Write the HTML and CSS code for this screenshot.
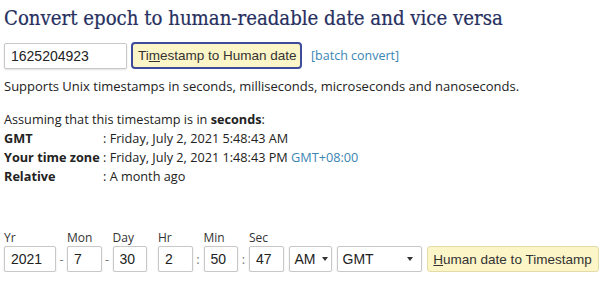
FILE: index.html
```html
<!DOCTYPE html>
<html lang="en">
<head>
  <meta charset="UTF-8">
  <title>Epoch Converter</title>
  <link rel="stylesheet" href="styles.css">
</head>
<body>
  <h1 class="title">Convert epoch to human-readable date and vice versa</h1>

  <div class="row convert-row">
    <input class="text-input ts-input" type="text" value="1625204923">
    <button class="btn btn-focus">Ti<u>m</u>estamp to Human date</button>
    <a class="link" href="#">[batch convert]</a>
  </div>

  <p class="note">Supports Unix timestamps in seconds, milliseconds, microseconds and nanoseconds.</p>

  <div class="result">
    <p class="assume">Assuming that this timestamp is in <b>seconds</b>:</p>
    <div class="res-row"><span class="res-label">GMT</span><span>: Friday, July 2, 2021 5:48:43 AM</span></div>
    <div class="res-row"><span class="res-label">Your time zone</span><span>: Friday, July 2, 2021 1:48:43 PM <a class="link" href="#">GMT+08:00</a></span></div>
    <div class="res-row"><span class="res-label">Relative</span><span>: A month ago</span></div>
  </div>

  <div class="date-form">
    <div class="field">
      <label>Yr</label>
      <input class="text-input w-yr" type="text" value="2021">
    </div>
    <span class="sep">-</span>
    <div class="field">
      <label>Mon</label>
      <input class="text-input w-sm" type="text" value="7">
    </div>
    <span class="sep">-</span>
    <div class="field">
      <label>Day</label>
      <input class="text-input w-sm" type="text" value="30">
    </div>
    <span class="sep"></span>
    <div class="field">
      <label>Hr</label>
      <input class="text-input w-sm" type="text" value="2">
    </div>
    <span class="sep">:</span>
    <div class="field">
      <label>Min</label>
      <input class="text-input w-sm" type="text" value="50">
    </div>
    <span class="sep">:</span>
    <div class="field">
      <label>Sec</label>
      <input class="text-input w-sm" type="text" value="47">
    </div>
    <div class="field gap-l">
      <div class="select w-ampm">AM<span class="caret"></span></div>
    </div>
    <div class="field">
      <div class="select w-tz">GMT<span class="caret"></span></div>
    </div>
    <div class="field">
      <button class="btn"><u>H</u>uman date to Timestamp</button>
    </div>
  </div>
</body>
</html>
```

FILE: styles.css
```css
body {
  margin: 0;
  padding: 0 4px;
  font-family: "Open Sans", sans-serif;
  font-size: 12.7px;
  color: #222;
  background: #fff;
}

.title {
  margin: 0;
  padding-top: 6px;
  font-family: "DejaVu Serif", serif;
  font-stretch: condensed;
  font-weight: normal;
  font-size: 20.2px;
  color: #27305f;
  white-space: nowrap;
  -webkit-text-stroke: 0.2px #27305f;
}

.row {
  display: flex;
  align-items: center;
}

.convert-row {
  margin-top: 12px;
}

.text-input {
  box-sizing: border-box;
  height: 26px;
  border: 1px solid #c8c8c8;
  border-radius: 2px;
  box-shadow: 0 1px 2px rgba(0, 0, 0, 0.12);
  padding: 0 6px;
  font-family: "Liberation Sans", Arial, sans-serif;
  font-size: 14px;
  color: #222;
  flex-shrink: 0;
}

.ts-input {
  width: 123px;
}

.btn {
  box-sizing: border-box;
  height: 26px;
  padding: 0 5px;
  background: #fcf5c7;
  border: 1px solid #e4dca8;
  border-radius: 3px;
  font-family: "Liberation Sans", Arial, sans-serif;
  font-size: 13.5px;
  color: #333;
  white-space: nowrap;
  flex-shrink: 0;
}

.btn-focus {
  margin-left: 4px;
  height: 27px;
  width: 171px;
  border: 2px solid #3d4b9a;
  border-radius: 4px;
}

.link {
  color: #3a86b4;
  text-decoration: none;
}

.convert-row .link {
  margin-left: 9px;
  font-size: 12.5px;
}

.note {
  margin: 8px 0 0;
  font-size: 13px;
}

.result {
  margin-top: 15px;
}

.assume {
  margin: 0 0 1px;
}

.res-row {
  display: flex;
  line-height: 19px;
}

.res-label {
  width: 99px;
  font-weight: bold;
}

.date-form {
  display: flex;
  align-items: flex-end;
  margin-top: 43px;
}

.field {
  display: flex;
  flex-direction: column;
  flex-shrink: 0;
}

.field label {
  font-size: 12px;
  line-height: 17px;
  color: #333;
}

.w-yr {
  width: 52px;
}

.w-sm {
  width: 34.5px;
}

.sep {
  flex-shrink: 0;
  width: 11px;
  height: 26px;
  line-height: 26px;
  text-align: center;
  color: #777;
}

.gap-l {
  margin-left: 5px;
}

.select {
  box-sizing: border-box;
  height: 26px;
  display: flex;
  align-items: center;
  justify-content: space-between;
  padding: 0 4px 0 5px;
  border: 1px solid #c8c8c8;
  border-radius: 2px;
  box-shadow: 0 1px 2px rgba(0, 0, 0, 0.12);
  font-family: "Liberation Sans", Arial, sans-serif;
  font-size: 14px;
  color: #222;
  margin-right: 5px;
}

.w-ampm {
  width: 43px;
  padding-right: 3px;
}

.w-tz {
  width: 85px;
  padding-right: 8px;
}

.caret {
  width: 0;
  height: 0;
  border-left: 3.5px solid transparent;
  border-right: 3.5px solid transparent;
  border-top: 4px solid #333;
}

.date-form .btn {
  width: 172px;
}
```
